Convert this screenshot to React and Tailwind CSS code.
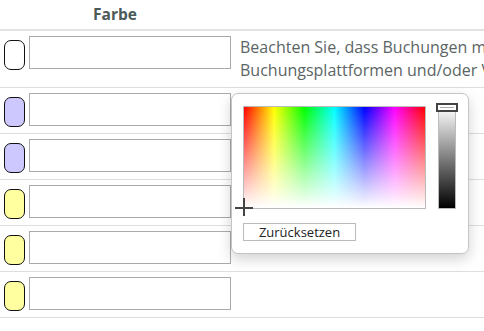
import React from 'react';

const rows = [
  { color: 'bg-white' },
  { color: 'bg-[#cdc8fd]' },
  { color: 'bg-[#cdc8fd]' },
  { color: 'bg-[#ffff9f]' },
  { color: 'bg-[#ffff9f]' },
  { color: 'bg-[#ffff9f]' },
];

// popup that jscolor puts over the table
const ColorPicker = () => {
  return (
    <div className="absolute left-[231px] top-[93px] w-[238px] bg-white border border-[#c4c4c4] rounded-[7px] shadow-[0_5px_14px_rgba(0,0,0,0.18)] pl-[11px] pt-[12px] pb-[12px] flex gap-[12px]">
      <div className="flex flex-col gap-[14px]">
        <div className="relative w-[183px] h-[103px] border border-[#bbb]">
          <div className="w-full h-full bg-[linear-gradient(to_right,#f00,#ff0,#0f0,#0ff,#00f,#f0f,#f00)]">
            <div className="w-full h-full bg-[linear-gradient(to_bottom,rgba(255,255,255,0),#fff)]"></div>
          </div>
          {/* crosshair */}
          <div className="absolute left-[-9px] bottom-[-1px] w-[18px] h-[2px] bg-[#444]"></div>
          <div className="absolute left-[-1px] bottom-[-8px] w-[2px] h-[18px] bg-[#444]"></div>
        </div>
        <button className="w-[113px] h-[18px] border border-[#bbb] bg-white text-[13px] leading-[16px] text-[#222] flex items-center justify-center">
          Zurücksetzen
        </button>
      </div>
      <div className="relative w-[18px] h-[103px] border border-[#bbb] bg-[linear-gradient(to_bottom,#fff,#000)]">
        <div className="absolute left-[-3px] top-[-4px] w-[22px] h-[9px] border-2 border-[#444] bg-white flex items-center justify-center">
          <div className="w-[14px] h-px bg-[#aaa]"></div>
        </div>
      </div>
    </div>
  );
};

export default function App() {
  return (
    <div className="relative w-[484px] h-[331px] overflow-hidden bg-white font-['Open_Sans',sans-serif]">
      <div className="flex h-[31px] border-b-2 border-[#e2e2e2]">
        <div className="w-[240px] pr-[10px] text-center text-[15.5px] font-bold leading-[29px] text-[#4b5959]">
          Farbe
        </div>
      </div>

      {rows.map((r, i) => (
        <div
          key={i}
          className={`flex border-b border-[#dedede] pt-[5px] ${i === 0 ? 'pb-[5px]' : 'pb-[6px]'}`}
        >
          <div className="w-[240px] shrink-0 flex items-start gap-[4px] pl-[4px]">
            <div className={`mt-[4px] w-[21px] h-[30px] rounded-[7px] border border-[#111] ${r.color}`}></div>
            <div className="w-[202px] h-[33px] border border-[#aaa] bg-white"></div>
          </div>
          {i === 0 && (
            <div className="text-[16px] leading-[23px] text-[#5b6565] whitespace-nowrap">
              <div>Beachten Sie, dass Buchungen mit externen</div>
              <div>Buchungsplattformen und/oder Vermittlern</div>
            </div>
          )}
        </div>
      ))}

      <ColorPicker />
    </div>
  );
}
